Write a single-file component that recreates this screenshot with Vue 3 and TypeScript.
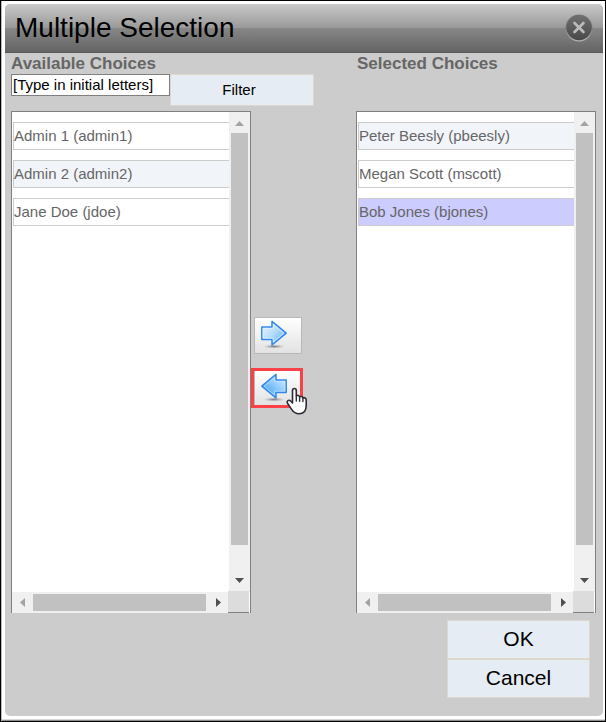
<script setup lang="ts">
import { ref } from 'vue'

interface Person {
  name: string
  login: string
  tone: 'plain' | 'alt' | 'picked'
}

interface Panel {
  id: string
  title: string
  people: Person[]
}

const query = ref('[Type in initial letters]')

const available: Panel = {
  id: 'available',
  title: 'Available Choices',
  people: [
    { name: 'Admin 1', login: 'admin1', tone: 'plain' },
    { name: 'Admin 2', login: 'admin2', tone: 'alt' },
    { name: 'Jane Doe', login: 'jdoe', tone: 'plain' },
  ],
}

const selected: Panel = {
  id: 'selected',
  title: 'Selected Choices',
  people: [
    { name: 'Peter Beesly', login: 'pbeesly', tone: 'alt' },
    { name: 'Megan Scott', login: 'mscott', tone: 'plain' },
    { name: 'Bob Jones', login: 'bjones', tone: 'picked' },
  ],
}

const panels: Panel[] = [available, selected]
</script>

<template>
  <div class="frame">
    <main class="dialog" role="dialog" aria-labelledby="dialog-title">
      <header class="titlebar">
        <h1 id="dialog-title">Multiple Selection</h1>
        <button class="close" type="button" aria-label="Close">
          <svg viewBox="0 0 28 28" width="28" height="28">
            <defs>
              <linearGradient id="disc" x1="0" y1="0" x2="0" y2="1">
                <stop offset="0" stop-color="#707070" />
                <stop offset="1" stop-color="#484848" />
              </linearGradient>
              <linearGradient id="rim" x1="0" y1="0" x2="0" y2="1">
                <stop offset="0" stop-color="#7c7c7c" />
                <stop offset="0.5" stop-color="#7a7a7a" />
                <stop offset="1" stop-color="#b4b4b4" />
              </linearGradient>
            </defs>
            <circle cx="14" cy="14" r="13.5" fill="url(#rim)" />
            <circle cx="14" cy="13.6" r="12.6" fill="url(#disc)" />
            <path d="M9.5 9 18.5 18M18.5 9 9.5 18" stroke="#bcbcbc" stroke-width="2.6" stroke-linecap="round" />
          </svg>
        </button>
      </header>

      <div class="body">
        <section class="heads">
          <div class="head">
            <h2>{{ available.title }}</h2>
            <form class="filter" @submit.prevent>
              <input v-model="query" type="text" aria-label="Filter available choices" />
              <button class="flat small" type="submit">Filter</button>
            </form>
          </div>
          <div class="head narrow">
            <h2>{{ selected.title }}</h2>
          </div>
        </section>

        <section class="columns">
          <template v-for="(panel, index) in panels" :key="panel.id">
            <div v-if="index === 1" class="movers">
              <button class="mover" type="button" aria-label="Add to selected choices">
                <svg viewBox="0 0 28 30" width="28" height="30">
                  <defs>
                    <linearGradient id="blue" x1="0" y1="0" x2="1" y2="1">
                      <stop offset="0" stop-color="#f4fbff" />
                      <stop offset="0.5" stop-color="#b4dcfc" />
                      <stop offset="1" stop-color="#4ba6f6" />
                    </linearGradient>
                    <radialGradient id="shade">
                      <stop offset="0" stop-color="#555" stop-opacity="0.75" />
                      <stop offset="1" stop-color="#999" stop-opacity="0" />
                    </radialGradient>
                  </defs>
                  <ellipse cx="14" cy="26.5" rx="11" ry="2.2" fill="url(#shade)" />
                  <path d="M1.8 7H12V1.400L26.200 13.200 12 25V19.500H1.800Z" fill="url(#blue)" stroke="#3288ea" stroke-width="1.5" stroke-linejoin="round" />
                  <path d="M3.2 8.400H13.400V4.400L24 13.200 13.400 22V18.100H3.200Z" fill="none" stroke="#e2f3ff" stroke-width="1" opacity="0.75" />
                </svg>
              </button>
              <span class="highlight">
                <button class="mover" type="button" aria-label="Remove from selected choices">
                  <svg viewBox="0 0 28 30" width="28" height="30">
                    <defs>
                      <linearGradient id="blue-back" x1="0" y1="1" x2="1" y2="0">
                        <stop offset="0" stop-color="#3a98f4" />
                        <stop offset="0.5" stop-color="#86c6fa" />
                        <stop offset="1" stop-color="#e4f4ff" />
                      </linearGradient>
                    </defs>
                    <ellipse cx="14" cy="26.5" rx="11" ry="2.2" fill="url(#shade)" />
                    <path d="M26.200 7H16V1.400L1.800 13.200 16 25V19.500H26.200Z" fill="url(#blue-back)" stroke="#3288ea" stroke-width="1.5" stroke-linejoin="round" />
                    <path d="M24.800 8.400H14.600V4.400L4 13.200 14.600 22V18.100H24.800Z" fill="none" stroke="#d2ecff" stroke-width="1" opacity="0.6" />
                  </svg>
                </button>
                <svg class="pointer" viewBox="0 0 22 28" width="22" height="28">
                  <path
                    d="M6.500 3.500C6.500 .8 10.300 .8 10.300 3.500V8.800C11.400 7.800 13.400 8.400 13.600 10 14.800 9 16.600 9.600 16.900 11 18.200 10.200 20.200 11 20.200 13V18.500C20.200 23.500 17.600 26.800 13 26.800 9.200 26.800 7.400 25.200 5.600 22.400L1.500 16.200C.4 14 2.800 12.200 4.600 14L6.500 16Z"
                    fill="#fff" stroke="#2c2c38" stroke-width="1.6" stroke-linejoin="round"
                  />
                  <path d="M10.3 9V14M13.600 10.200V14.300M16.900 11.200V14.500" fill="none" stroke="#2c2c38" stroke-width="1.4" stroke-linecap="round" />
                </svg>
              </span>
            </div>

            <div class="panel">
              <ul :aria-label="panel.title">
                <li v-for="person in panel.people" :key="person.login" :class="person.tone">
                  {{ person.name }} ({{ person.login }})
                </li>
              </ul>
              <div class="bar vertical">
                <svg viewBox="0 0 21 21"><path d="M6 14 10.500 9 15 14Z" fill="#a3a3a3" /></svg>
                <div class="track"><div class="thumb"></div></div>
                <svg viewBox="0 0 21 21"><path d="M6 7 10.500 12 15 7Z" fill="#505050" /></svg>
              </div>
              <div class="bar horizontal">
                <svg viewBox="0 0 21 21"><path d="M13 6 8 10.500 13 15Z" fill="#a3a3a3" /></svg>
                <div class="track"><div class="thumb"></div></div>
                <svg viewBox="0 0 21 21"><path d="M8 6 13 10.500 8 15Z" fill="#505050" /></svg>
              </div>
              <div class="corner"></div>
            </div>
          </template>
        </section>

        <footer class="actions">
          <button class="flat large" type="button">OK</button>
          <button class="flat large" type="button">Cancel</button>
        </footer>
      </div>
    </main>
  </div>
</template>

<style>
body {
  margin: 0;
}
</style>

<style scoped>
* {
  box-sizing: border-box;
}

.frame {
  display: flex;
  min-height: 100vh;
  padding: 3px 2px 5px 4px;
  border: 1px solid #000;
  background: linear-gradient(to right, #b8b8b8 1px, transparent 1px), linear-gradient(to top, #909090 1px, #d8d8d8 1px, #d8d8d8 2px, #fff 2px);
  font-family: 'Liberation Sans', Arial, sans-serif;
  color: #000;
}

.dialog {
  display: flex;
  flex: 1;
  flex-direction: column;
  min-width: 0;
  border-radius: 5px;
  overflow: hidden;
  background: #ccc;
}

.titlebar {
  display: flex;
  align-items: center;
  justify-content: space-between;
  height: 49px;
  padding: 0 10px;
  border-bottom: 1px solid #585858;
  background: linear-gradient(#c9c9c9, #989898 51%, #868686 51%, #646464);
}

h1,
h2 {
  margin: 0;
}

h1 {
  font-size: 28px;
  font-weight: 400;
  line-height: 48px;
}

h2 {
  color: #666;
  font-size: 17px;
  line-height: 21px;
}

button {
  padding: 0;
  font-family: inherit;
  color: inherit;
}

svg {
  display: block;
}

.close {
  border: 0;
  background: none;
}

.body {
  display: flex;
  flex: 1;
  flex-direction: column;
  padding: 0 7px 18px 6px;
}

.heads {
  display: flex;
  min-height: 58px;
}

.head {
  flex: 1;
}

.head.narrow {
  flex: 0 0 calc((100% - 105px) / 2);
  padding-left: 1px;
}

.filter {
  display: flex;
  align-items: flex-start;
}

input {
  width: 159px;
  height: 22px;
  padding: 0 1px 2px;
  border: 1px solid #808080;
  border-radius: 0;
  background: #fff;
  color: #000;
  font-family: inherit;
  font-size: 15px;
}

.flat {
  border: 1px solid #dcd8cc;
  background: #e5ecf4;
}

.flat.small {
  width: 144px;
  height: 32px;
  padding: 0 6px 2px 0;
  font-size: 15px;
}

.flat.large {
  width: 143px;
  height: 39px;
  padding-bottom: 2px;
  font-size: 21px;
}

.columns {
  display: flex;
  flex: 1;
}

.panel {
  display: grid;
  flex: 1;
  grid-template-columns: minmax(0, 1fr) 21px;
  grid-template-rows: minmax(240px, 1fr) 21px;
  border: 1px solid #808080;
  border-bottom: 0;
  background: #fff;
}

ul {
  display: flex;
  flex-direction: column;
  gap: 10px;
  margin: 0;
  padding: 10px 0 0 1px;
  list-style: none;
}

li {
  border: 1px solid #ccc;
  border-right: 0;
  color: #666;
  font-size: 15px;
  line-height: 26px;
  white-space: nowrap;
}

.alt {
  background: #f1f5fa;
}

.picked {
  background: #ccf;
}

.bar {
  display: flex;
  background: #f0f0f0;
}

.bar svg {
  flex: none;
  width: 21px;
  height: 21px;
}

.vertical {
  flex-direction: column;
}

.track {
  flex: 1;
}

.thumb {
  background: #c1c1c1;
}

.vertical .thumb {
  width: 17px;
  height: 94%;
  margin: 0 2px;
}

.horizontal .thumb {
  height: 17px;
  margin: 2px 2px 2px 0;
}

.corner {
  margin: -1px 1px 0 -1px;
  border-bottom: 1px solid #808080;
  background: #dcdcdc;
}

.movers {
  display: flex;
  flex: 0 0 105px;
  flex-direction: column;
  align-items: flex-start;
  justify-content: center;
  gap: 14px;
}

.mover {
  display: flex;
  align-items: center;
  width: 48px;
  height: 37px;
  margin-left: 3px;
  padding-left: 5px;
  border: 1px solid #b8b8b8;
  background: linear-gradient(#fff, #e2e2e2);
}

.highlight {
  position: relative;
  border: 3px solid #fa4148;
}

.highlight .mover {
  width: 46px;
  height: 34px;
  margin: 0;
  border-width: 0 0 0 1px;
}

.pointer {
  position: absolute;
  top: 16px;
  left: 32px;
}

.actions {
  display: flex;
  flex-direction: column;
  align-items: flex-end;
  padding: 7px 6px 0 0;
}
</style>
